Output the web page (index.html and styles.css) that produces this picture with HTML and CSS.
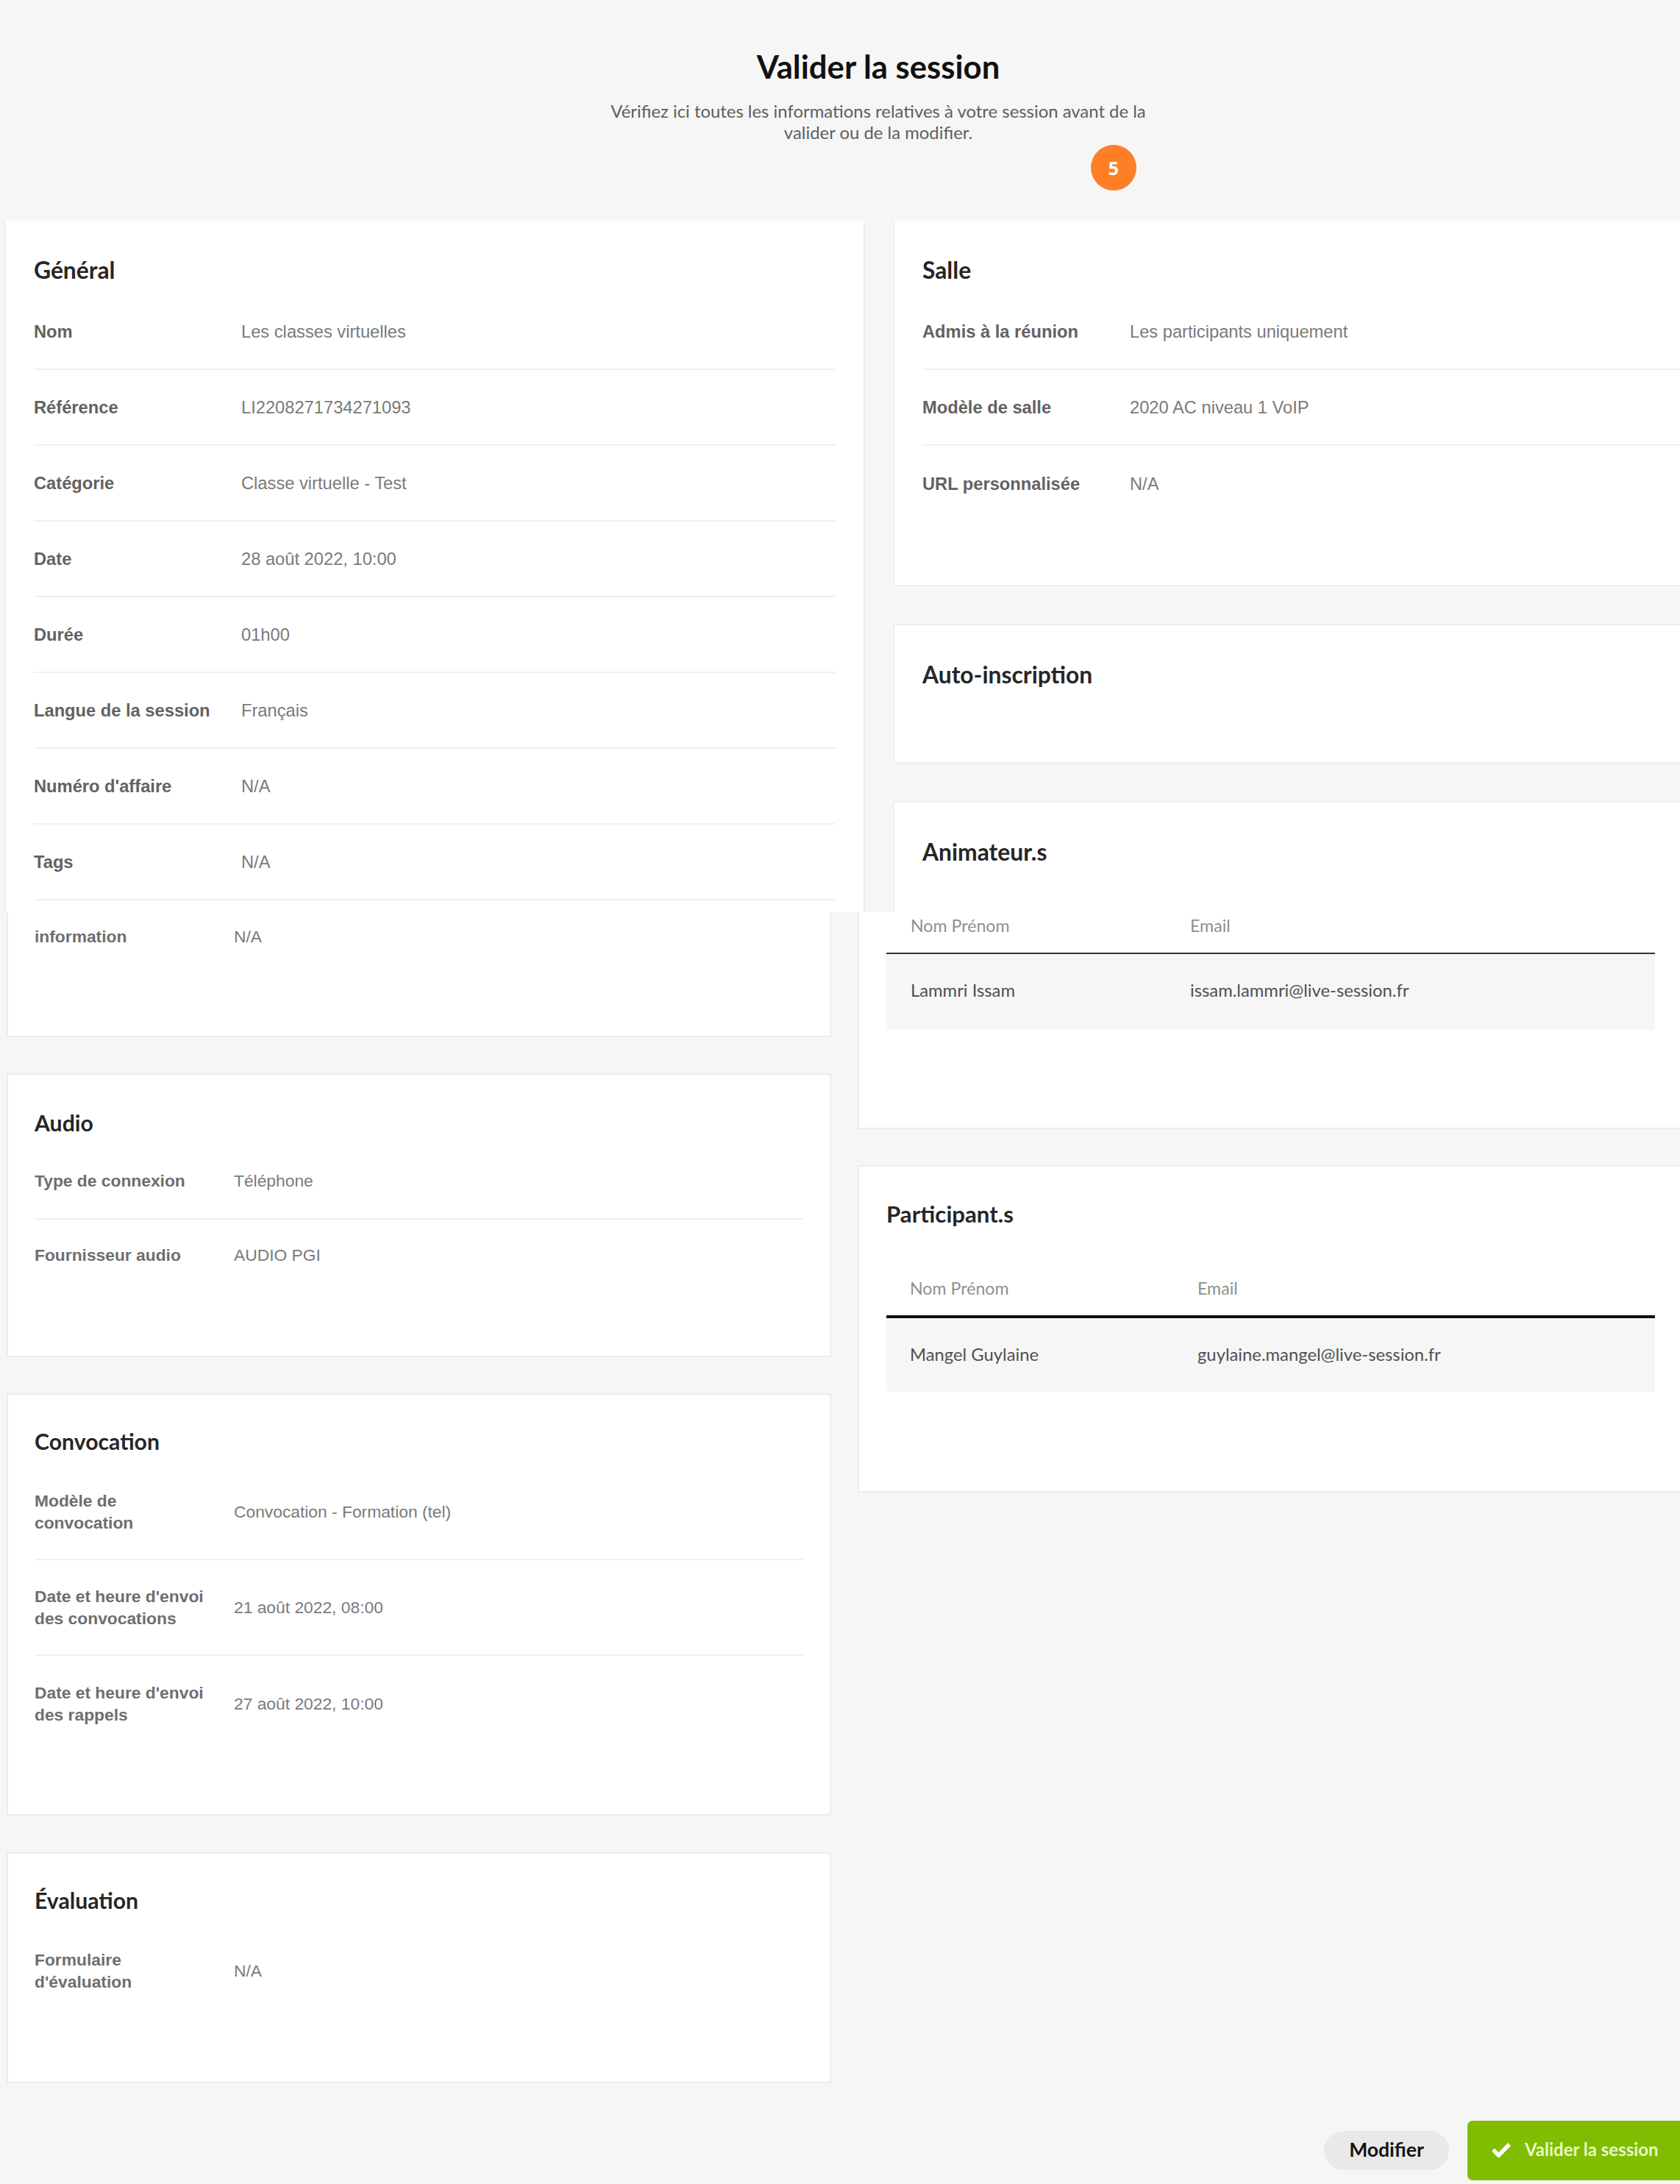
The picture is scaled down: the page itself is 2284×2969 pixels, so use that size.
FILE: index.html
```html
<!DOCTYPE html>
<html lang="fr">
<head>
<meta charset="utf-8">
<title>Valider la session</title>
<link rel="stylesheet" href="styles.css">
</head>
<body>
<div class="page">
  <header class="head">
    <h1 class="head-title">Valider la session</h1>
    <p class="head-sub">Vérifiez ici toutes les informations relatives à votre session avant de la<br>valider ou de la modifier.</p>
    <span class="badge">5</span>
  </header>

  <section class="upper">
    <div class="col">
      <div class="card card-general">
        <h2 class="card-title">Général</h2>
        <div class="row"><span class="label">Nom</span><span class="value">Les classes virtuelles</span></div>
        <div class="row"><span class="label">Référence</span><span class="value">LI2208271734271093</span></div>
        <div class="row"><span class="label">Catégorie</span><span class="value">Classe virtuelle - Test</span></div>
        <div class="row"><span class="label">Date</span><span class="value">28 août 2022, 10:00</span></div>
        <div class="row"><span class="label">Durée</span><span class="value">01h00</span></div>
        <div class="row"><span class="label">Langue de la session</span><span class="value">Français</span></div>
        <div class="row"><span class="label">Numéro d'affaire</span><span class="value">N/A</span></div>
        <div class="row"><span class="label">Tags</span><span class="value">N/A</span></div>
      </div>
    </div>
    <div class="col">
      <div class="card card-salle">
        <h2 class="card-title">Salle</h2>
        <div class="row"><span class="label">Admis à la réunion</span><span class="value">Les participants uniquement</span></div>
        <div class="row"><span class="label">Modèle de salle</span><span class="value">2020 AC niveau 1 VoIP</span></div>
        <div class="row row-plain"><span class="label">URL personnalisée</span><span class="value">N/A</span></div>
      </div>
      <div class="card card-auto">
        <h2 class="card-title">Auto-inscription</h2>
      </div>
      <div class="card card-anim-top">
        <h2 class="card-title">Animateur.s</h2>
      </div>
    </div>
  </section>

  <section class="lower">
    <div class="lower-left">
      <div class="lcard lcard-info">
        <div class="lrow lrow-plain lrow-info"><span class="llabel">information</span><span class="lvalue">N/A</span></div>
      </div>
      <div class="lcard lcard-audio">
        <h2 class="card-title lcard-title">Audio</h2>
        <div class="lrow"><span class="llabel">Type de connexion</span><span class="lvalue">Téléphone</span></div>
        <div class="lrow lrow-plain"><span class="llabel">Fournisseur audio</span><span class="lvalue">AUDIO PGI</span></div>
      </div>
      <div class="lcard lcard-conv">
        <h2 class="card-title lcard-title">Convocation</h2>
        <div class="lrow lrow-tall"><span class="llabel">Modèle de convocation</span><span class="lvalue">Convocation - Formation (tel)</span></div>
        <div class="lrow lrow-tall"><span class="llabel">Date et heure d'envoi des convocations</span><span class="lvalue">21 août 2022, 08:00</span></div>
        <div class="lrow lrow-tall lrow-plain"><span class="llabel">Date et heure d'envoi des rappels</span><span class="lvalue">27 août 2022, 10:00</span></div>
      </div>
      <div class="lcard lcard-eval">
        <h2 class="card-title lcard-title">Évaluation</h2>
        <div class="lrow lrow-tall lrow-plain"><span class="llabel">Formulaire d'évaluation</span><span class="lvalue">N/A</span></div>
      </div>
    </div>

    <div class="lower-right">
      <div class="rcard rcard-anim">
        <table class="people people-anim">
          <thead><tr><th class="c-name">Nom Prénom</th><th>Email</th></tr></thead>
          <tbody><tr><td class="c-name">Lammri Issam</td><td>issam.lammri@live-session.fr</td></tr></tbody>
        </table>
      </div>
      <div class="rcard rcard-part">
        <h2 class="card-title rcard-title">Participant.s</h2>
        <table class="people people-part">
          <thead><tr><th class="c-name">Nom Prénom</th><th>Email</th></tr></thead>
          <tbody><tr><td class="c-name">Mangel Guylaine</td><td>guylaine.mangel@live-session.fr</td></tr></tbody>
        </table>
      </div>
    </div>
  </section>

  <footer class="foot">
    <button class="btn-modify" type="button">Modifier</button>
    <button class="btn-validate" type="button">
      <svg class="check" viewBox="0 0 28 22" width="28" height="22" aria-hidden="true"><path d="M3 11.5l7.5 7.5L25 4" fill="none" stroke="#ffffff" stroke-width="5.5"/></svg>
      <span>Valider la session</span>
    </button>
  </footer>
</div>
</body>
</html>
```

FILE: styles.css
```css
* { box-sizing: border-box; }
html, body { margin: 0; padding: 0; }
body {
  background: #f6f6f6;
  font-family: "Liberation Sans", Arial, sans-serif;
  font-variant-ligatures: none;
}

.page {
  position: relative;
  width: 2284px;
  height: 2969px;
  overflow: hidden;
  background: #f6f6f6;
}

/* Header */
.head {
  position: relative;
  width: 2388px;
  height: 300px;
  padding-top: 66px;
  text-align: center;
}
.head-title {
  margin: 0;
  font: 700 43.7px/48px Lato, sans-serif;
  color: #111;
}
.head-sub {
  margin: 23px 0 0;
  font: 400 23.9px/28.5px Lato, sans-serif;
  color: #5e5e5e;
}
.badge {
  position: absolute;
  left: 1483px;
  top: 197px;
  display: flex;
  align-items: center;
  justify-content: center;
  width: 62px;
  height: 62px;
  border-radius: 50%;
  background: #ff7f27;
  color: #fff;
  font: 700 25px/1 "Open Sans", sans-serif;
}

/* Upper stitched part */
.upper {
  display: flex;
  gap: 42px;
  height: 940px;
  padding: 0 0 0 8px;
  overflow: hidden;
}
.col {
  flex: none;
  width: 1166px;
  display: flex;
  flex-direction: column;
  gap: 55px;
}
.card {
  flex: none;
  padding: 49px 38px 0;
  background: #fff;
  box-shadow: 0 0 0 2px #eeeeee;
}
.card-general { height: 1000px; }
.card-salle { height: 495px; }
.card-auto { height: 186px; }
.card-anim-top { height: 300px; }

.card-title {
  margin: 0 0 15px;
  font: 700 31.8px/36px Lato, sans-serif;
  color: #262626;
}
.row {
  display: flex;
  align-items: center;
  height: 103px;
  padding-top: 2px;
  border-bottom: 2px solid #f0f0f0;
}
.row-plain { border-bottom: 0; }
.label {
  flex: none;
  width: 282px;
  font-size: 23.7px;
  font-weight: 700;
  color: #626262;
}
.value {
  font-size: 23.7px;
  color: #7a7a7a;
}

/* Lower stitched part */
.lower {
  display: flex;
  gap: 40px;
  padding-left: 11px;
}
.lower-left {
  flex: none;
  width: 1117px;
  display: flex;
  flex-direction: column;
  gap: 53px;
}
.lcard {
  flex: none;
  padding: 45px 36px 0;
  background: #fff;
  box-shadow: 0 0 0 2px #ececec;
}
.lcard-info { height: 168px; padding-top: 0; clip-path: inset(0 -3px -3px -3px); }
.lcard-audio { height: 382px; padding-top: 47px; }
.lcard-conv { height: 570px; margin-bottom: 1px; }
.lcard-eval { height: 310px; }
.lcard-title { margin-bottom: 14px; font-size: 30.2px; }
.lcard-audio .lcard-title { margin-bottom: 10px; }
.lcard-eval .lcard-title { margin-bottom: 13px; }
.lrow {
  display: flex;
  align-items: center;
  height: 104px;
  border-bottom: 2px solid #f0f0f0;
}
.lrow-plain { border-bottom: 0; }
.lcard-audio .lrow-plain { height: 96px; }
.lrow-info { height: 66px; }
.lrow-tall { height: 130px; }
.llabel {
  flex: none;
  width: 271px;
  padding-right: 24px;
  font-size: 22.8px;
  line-height: 30px;
  font-weight: 700;
  color: #6e6e6e;
}
.lvalue {
  font-size: 22.8px;
  color: #7a7a7a;
}

.lower-right {
  flex: none;
  width: 1220px;
  display: flex;
  flex-direction: column;
  gap: 53px;
}
.rcard {
  flex: none;
  background: #fff;
  box-shadow: 0 0 0 2px #ececec;
}
.rcard-anim { height: 293px; padding-left: 37px; clip-path: inset(0 -3px -3px -3px); }
.rcard-part { height: 441px; padding: 46px 0 0 37px; }
.rcard-title { margin-bottom: 58px; font-size: 31.2px; }

.people {
  width: 1045px;
  border-collapse: collapse;
  table-layout: fixed;
  font-family: Lato, sans-serif;
}
.people th, .people td {
  padding: 0;
  text-align: left;
  font-size: 23.8px;
}
.people th {
  font-weight: 400;
  font-size: 23.2px;
  color: #8f8f8f;
}
.people td {
  background: #f6f6f6;
  color: #505050;
}
.people .c-name { padding-left: 33px; }

.people-anim .c-name { width: 413px; }
.people-anim th { height: 56px; padding-bottom: 19px; border-bottom: 2px solid #333; }
.people-anim td { height: 104px; padding-bottom: 6px; }

.people-part .c-name { width: 423px; padding-left: 32px; }
.people-part th { height: 64px; border-bottom: 4px solid #111; padding-bottom: 12px; }
.people-part td { height: 102px; padding-bottom: 2px; }

/* Footer */
.foot {
  display: flex;
  align-items: center;
  justify-content: flex-end;
  gap: 25px;
  height: 81px;
  margin-top: 53px;
}
.btn-modify {
  width: 170px;
  height: 53px;
  padding: 0 0 3px;
  border: 0;
  border-radius: 27px;
  background: #e9e9e9;
  color: #141414;
  font: 700 26.5px/1 Lato, sans-serif;
}
.btn-validate {
  display: flex;
  align-items: center;
  gap: 18px;
  width: 289px;
  height: 81px;
  padding: 0 0 3px 32px;
  border: 0;
  border-radius: 7px 0 0 7px;
  background: #80bc00;
  color: #e9f8c4;
  font: 700 24px/1 Lato, sans-serif;
}
.check { flex: none; }
```
